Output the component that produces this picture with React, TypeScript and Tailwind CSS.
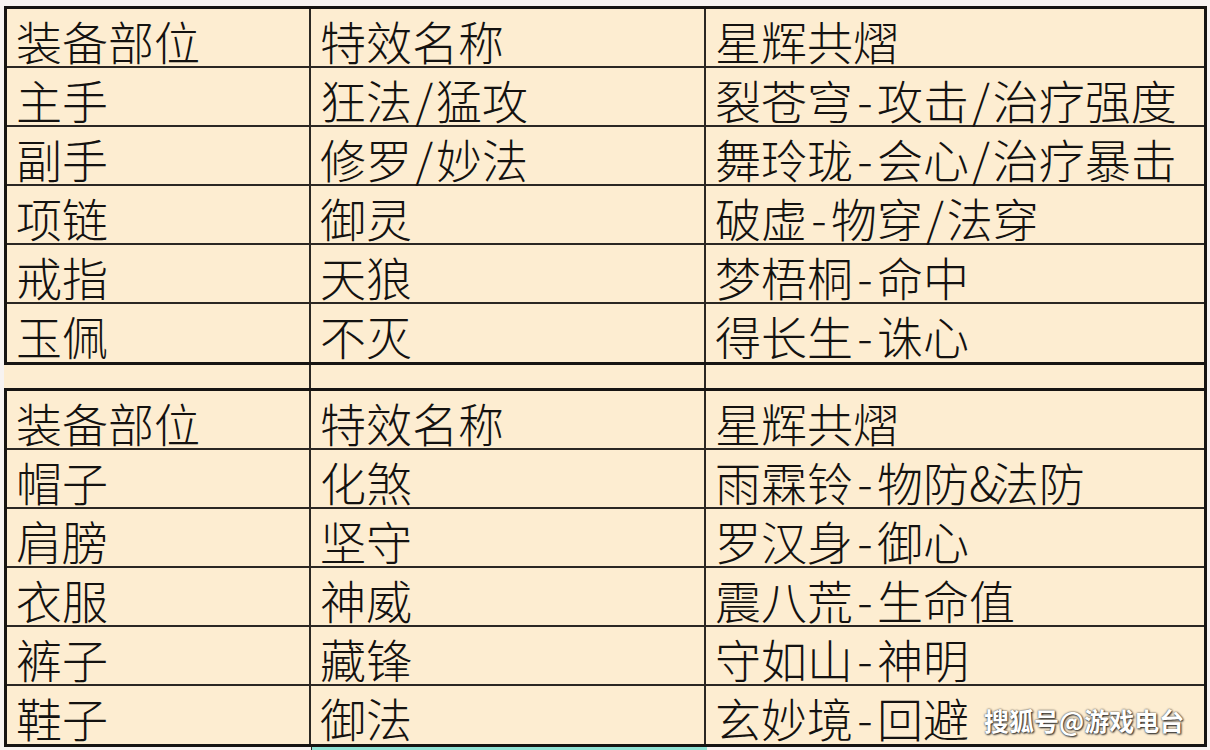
import React from 'react';

type Row = [string, string, string];

const top: Row[] = [
  ['装备部位', '特效名称', '星辉共熠'],
  ['主手', '狂法/猛攻', '裂苍穹-攻击/治疗强度'],
  ['副手', '修罗/妙法', '舞玲珑-会心/治疗暴击'],
  ['项链', '御灵', '破虚-物穿/法穿'],
  ['戒指', '天狼', '梦梧桐-命中'],
  ['玉佩', '不灭', '得长生-诛心'],
];

const bottom: Row[] = [
  ['装备部位', '特效名称', '星辉共熠'],
  ['帽子', '化煞', '雨霖铃-物防&法防'],
  ['肩膀', '坚守', '罗汉身-御心'],
  ['衣服', '神威', '震八荒-生命值'],
  ['裤子', '藏锋', '守如山-神明'],
  ['鞋子', '御法', '玄妙境-回避'],
];

const font = { fontFamily: '"Noto Sans CJK SC", "Noto Sans", sans-serif' };

// ascii signs sit in half-width boxes, like the spreadsheet's song font
function Text({ s }: { s: string }) {
  return (
    <>
      {s.split(/([-/&])/).map((p, i) =>
        /^[-/&]$/.test(p) ? (
          <span key={i} className="inline-block w-[0.52em] text-center">
            {p}
          </span>
        ) : (
          <span key={i}>{p}</span>
        )
      )}
    </>
  );
}

function Block({ rows }: { rows: Row[] }) {
  const cell =
    'pl-[9px] pt-[4px] flex items-center text-[46px] leading-none text-[#141210] font-light whitespace-nowrap';
  return (
    <div className="border-[3px] border-[#161412] bg-[#fdedd1]">
      {rows.map((r, i) => (
        <div
          key={i}
          className={
            i === rows.length - 1
              ? 'flex h-[58px]'
              : 'flex h-[59px] border-b-2 border-[#2b2723]'
          }
        >
          <div className={'w-[304px] shrink-0 border-r-2 border-[#2b2723] ' + cell}>
            <Text s={r[0]} />
          </div>
          <div className={'w-[395px] shrink-0 border-r-2 border-[#2b2723] ' + cell}>
            <Text s={r[1]} />
          </div>
          <div className={'flex-1 ' + cell}>
            <Text s={r[2]} />
          </div>
        </div>
      ))}
    </div>
  );
}

export default function App() {
  return (
    <div className="w-[1210px] h-[750px] bg-[#f7f3f1] overflow-hidden" style={font}>
      <div className="relative pt-[6px] pl-[4px] w-[1207px]">
        <Block rows={top} />
        <div className="flex h-[23px] bg-[#fdedd1] border-r-[3px] border-[#161412]">
          <div className="w-[307px] shrink-0 border-r-2 border-[#2b2723]" />
          <div className="w-[395px] shrink-0 border-r-2 border-[#2b2723]" />
          <div className="flex-1" />
        </div>
        <Block rows={bottom} />
        <div className="flex h-[10px]">
          <div className="w-[307px] shrink-0" />
          <div className="w-[396px] shrink-0 bg-[#8fe2d4] border-l border-[#2b2723]" />
        </div>
        <div
          className="absolute left-[984px] top-[708px] text-[25px] leading-none font-bold text-white whitespace-nowrap"
          style={{ textShadow: '0 0 2px #333, 1px 1px 2px #222' }}
        >
          搜狐号@游戏电台
        </div>
      </div>
    </div>
  );
}
